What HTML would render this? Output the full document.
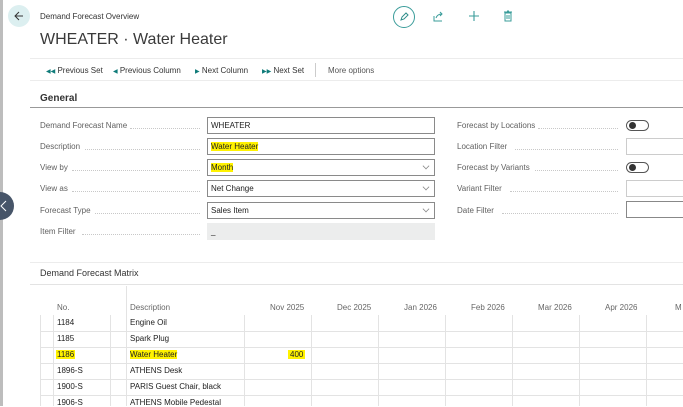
<!DOCTYPE html>
<html><head><meta charset="utf-8"><style>
*{margin:0;padding:0;box-sizing:border-box}
body{width:683px;height:406px;overflow:hidden;background:#fff;font-family:"Liberation Sans",sans-serif;color:#212121;position:relative}
.a{position:absolute;white-space:nowrap}
.s{font-size:8px}
.lbl{font-size:8px;color:#606060;position:absolute;white-space:nowrap;overflow:hidden}
.dots{position:absolute;border-bottom:1px dotted #c8c8c8;height:0}
.inp{position:absolute;left:207px;width:228px;height:17px;border:1px solid #8a8a8a;font-size:8px;padding:3px 3px;color:#212121}
.hl{background:#fff200}
.chev{position:absolute;right:5px;top:3px;width:6px;height:6px;border-right:1px solid #888;border-bottom:1px solid #888;transform:rotate(45deg) scale(.8)}
.vl{position:absolute;width:1px;background:#e3e3e3}
.hr{position:absolute;height:1px;background:#e3e3e3}
.tb{font-size:8px;color:#333;position:absolute;top:66px}
.tri{color:#0f7b79;font-size:6px}
</style></head><body>
<div class="a" style="left:0;top:0;width:3px;height:406px;background:#bdbdbd"></div>
<div class="a" style="left:8px;top:5px;width:22px;height:22px;border-radius:50%;background:#dceff0"></div>
<svg class="a" style="left:13px;top:10px" width="12" height="12" viewBox="0 0 12 12"><path d="M10 6H2M6 2L2 6l4 4" stroke="#333" fill="none" stroke-width="1"/></svg>
<div class="a s" style="left:40px;top:12px;color:#333">Demand Forecast Overview</div>
<div class="a" style="left:40px;top:31px;font-size:16px;color:#3a3a3a">WHEATER · Water Heater</div>
<div class="a" style="left:393px;top:6px;width:22px;height:22px;border-radius:50%;border:1.2px solid #3a9c9a"></div>
<svg class="a" style="left:399px;top:12px" width="10" height="10" viewBox="0 0 10 10"><path d="M2 8l1-3 4-4 2 2-4 4z" stroke="#2e8c8a" fill="none" stroke-width="1"/></svg>
<svg class="a" style="left:433px;top:11px" width="11" height="11" viewBox="0 0 11 11"><path d="M1 5v5h8M3 7c1-3 3-4 6-4M7 1l2 2-2 2" stroke="#3a9c9a" fill="none" stroke-width="1"/></svg>
<svg class="a" style="left:468px;top:10px" width="12" height="12" viewBox="0 0 12 12"><path d="M6 1v10M1 6h10" stroke="#3a9c9a" stroke-width="1.1"/></svg>
<svg class="a" style="left:503px;top:10px" width="10" height="12" viewBox="0 0 10 12"><path d="M2 3h6v8H2zM1 2h8M4 1h2M4 5v4M6 5v4" stroke="#3a9c9a" fill="none" stroke-width="1"/></svg>
<div class="hr" style="left:30px;top:58px;width:653px;background:#ececec"></div>
<div class="hr" style="left:30px;top:80px;width:653px;background:#ececec"></div>
<div class="tb" style="left:46px"><span class="tri">◀◀</span> Previous Set</div>
<div class="tb" style="left:113px"><span class="tri">◀</span> Previous Column</div>
<div class="tb" style="left:195px"><span class="tri">▶</span> Next Column</div>
<div class="tb" style="left:262px"><span class="tri">▶▶</span> Next Set</div>
<div class="a" style="left:315px;top:63px;width:1px;height:14px;background:#ccc"></div>
<div class="tb" style="left:328px;color:#555">More options</div>
<div class="a" style="left:40px;top:93px;font-size:10px;font-weight:bold;color:#333">General</div>
<div class="hr" style="left:30px;top:107px;width:653px;background:#999"></div>

<div class="lbl" style="left:40px;top:121px">Demand Forecast Name</div><div class="dots" style="left:130px;width:70px;top:128px"></div>
<div class="inp" style="top:117px">WHEATER</div>
<div class="lbl" style="left:40px;top:142px">Description</div><div class="dots" style="left:85px;width:115px;top:149px"></div>
<div class="inp" style="top:138px"><span class="hl">Water Heater</span></div>
<div class="lbl" style="left:40px;top:163px">View by</div><div class="dots" style="left:72px;width:128px;top:170px"></div>
<div class="inp" style="top:159px"><span class="hl">Month</span><i class="chev"></i></div>
<div class="lbl" style="left:40px;top:184px">View as</div><div class="dots" style="left:72px;width:128px;top:191px"></div>
<div class="inp" style="top:180px">Net Change<i class="chev"></i></div>
<div class="lbl" style="left:40px;top:206px">Forecast Type</div><div class="dots" style="left:95px;width:105px;top:213px"></div>
<div class="inp" style="top:202px">Sales Item<i class="chev"></i></div>
<div class="lbl" style="left:40px;top:227px">Item Filter</div><div class="dots" style="left:82px;width:118px;top:234px"></div>
<div class="inp" style="top:223px;background:#eceded;border-color:#eceded">_</div>

<div class="lbl" style="left:457px;top:121px">Forecast by Locations</div><div class="dots" style="left:538px;width:80px;top:128px"></div>
<div class="a" style="left:626px;top:120px;width:23px;height:11px;border:1px solid #555;border-radius:6px"></div>
<div class="a" style="left:629px;top:122px;width:7px;height:7px;border-radius:50%;background:#333"></div>
<div class="lbl" style="left:457px;top:142px">Location Filter</div><div class="dots" style="left:515px;width:103px;top:149px"></div>
<div class="a" style="left:626px;top:138px;width:60px;height:17px;border:1px solid #ccc"></div>
<div class="lbl" style="left:457px;top:163px">Forecast by Variants</div><div class="dots" style="left:535px;width:83px;top:170px"></div>
<div class="a" style="left:626px;top:162px;width:23px;height:11px;border:1px solid #555;border-radius:6px"></div>
<div class="a" style="left:629px;top:164px;width:7px;height:7px;border-radius:50%;background:#333"></div>
<div class="lbl" style="left:457px;top:184px">Variant Filter</div><div class="dots" style="left:510px;width:108px;top:191px"></div>
<div class="a" style="left:626px;top:180px;width:60px;height:17px;border:1px solid #ccc"></div>
<div class="lbl" style="left:457px;top:206px">Date Filter</div><div class="dots" style="left:502px;width:116px;top:213px"></div>
<div class="a" style="left:626px;top:201px;width:60px;height:17px;border:1px solid #888"></div>

<div class="a" style="left:-14px;top:192px;width:28px;height:28px;border-radius:50%;background:#475569"></div>
<svg class="a" style="left:0;top:200px" width="8" height="12" viewBox="0 0 8 12"><path d="M6 1L1 6l5 5" stroke="#fff" fill="none" stroke-width="1"/></svg>

<div class="hr" style="left:30px;top:262px;width:653px;background:#ececec"></div>
<div class="a" style="left:40px;top:268px;font-size:9px;color:#333">Demand Forecast Matrix</div>
<div class="hr" style="left:30px;top:284px;width:653px"></div>
<div class="vl" style="left:126px;top:286px;height:120px"></div>
<div class="a s" style="left:57px;top:303px;color:#666">No.</div>
<div class="a s" style="left:130px;top:303px;color:#666">Description</div>
<div class="a s" style="left:270px;top:303px;width:32px;text-align:right;color:#666">Nov 2025</div>
<div class="a s" style="left:337px;top:303px;width:32px;text-align:right;color:#666">Dec 2025</div>
<div class="a s" style="left:404px;top:303px;width:32px;text-align:right;color:#666">Jan 2026</div>
<div class="a s" style="left:471px;top:303px;width:32px;text-align:right;color:#666">Feb 2026</div>
<div class="a s" style="left:538px;top:303px;width:32px;text-align:right;color:#666">Mar 2026</div>
<div class="a s" style="left:605px;top:303px;width:32px;text-align:right;color:#666">Apr 2026</div>
<div class="a s" style="left:675px;top:303px;color:#666">M</div>

<div class="vl" style="left:40px;top:315px;height:91px"></div>
<div class="vl" style="left:53px;top:315px;height:91px"></div>
<div class="vl" style="left:110px;top:315px;height:91px"></div>
<div class="vl" style="left:244px;top:315px;height:91px"></div>
<div class="vl" style="left:311px;top:315px;height:91px"></div>
<div class="vl" style="left:378px;top:315px;height:91px"></div>
<div class="vl" style="left:445px;top:315px;height:91px"></div>
<div class="vl" style="left:512px;top:315px;height:91px"></div>
<div class="vl" style="left:579px;top:315px;height:91px"></div>
<div class="vl" style="left:646px;top:315px;height:91px"></div>
<div class="hr" style="left:40px;top:331px;width:643px"></div>
<div class="hr" style="left:40px;top:347px;width:643px"></div>
<div class="hr" style="left:40px;top:363px;width:643px"></div>
<div class="hr" style="left:40px;top:379px;width:643px"></div>
<div class="hr" style="left:40px;top:395px;width:643px"></div>

<div class="a s" style="left:57px;top:318px">1184</div><div class="a s" style="left:130px;top:318px">Engine Oil</div>
<div class="a s" style="left:57px;top:334px">1185</div><div class="a s" style="left:130px;top:334px">Spark Plug</div>
<div class="a s hl" style="left:56px;top:350px;padding:0 1px">1186</div><div class="a s hl" style="left:130px;top:350px">Water Heater</div>
<div class="a s hl" style="left:288px;top:350px;padding:0 2px">400</div>
<div class="a s" style="left:57px;top:366px">1896-S</div><div class="a s" style="left:130px;top:366px">ATHENS Desk</div>
<div class="a s" style="left:57px;top:382px">1900-S</div><div class="a s" style="left:130px;top:382px">PARIS Guest Chair, black</div>
<div class="a s" style="left:57px;top:398px">1906-S</div><div class="a s" style="left:130px;top:398px">ATHENS Mobile Pedestal</div>
</body></html>
